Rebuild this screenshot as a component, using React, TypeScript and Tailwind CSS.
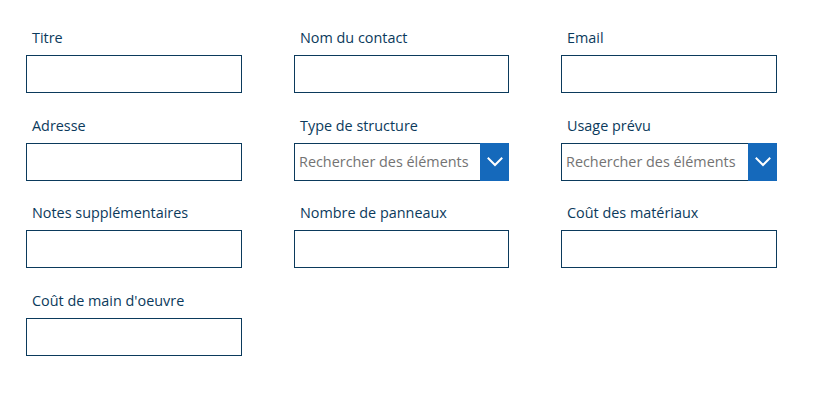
import React from 'react';

type Field = { label: string; kind?: 'text' | 'select' };

const fields: Field[] = [
  { label: 'Titre' },
  { label: 'Nom du contact' },
  { label: 'Email' },
  { label: 'Adresse' },
  { label: 'Type de structure', kind: 'select' },
  { label: 'Usage prévu', kind: 'select' },
  { label: 'Notes supplémentaires' },
  { label: 'Nombre de panneaux' },
  { label: 'Coût des matériaux' },
  { label: "Coût de main d'oeuvre" },
];

const ChevronDown = () => (
  <svg width="18" height="18" viewBox="0 0 18 18" fill="none">
    <path d="M2.5 5.5 9 12l6.5-6.5" stroke="white" strokeWidth="2" strokeLinecap="square" />
  </svg>
);

const FormField: React.FC<{ field: Field }> = ({ field }) => (
  <div className="flex flex-col">
    <label className="px-[6px] text-[14.4px] leading-[20px] text-[#0b3a5c] mb-[7px]">{field.label}</label>
    {field.kind === 'select' ? (
      <div className="flex h-[38px] border border-[#0b3a5c] bg-white">
        <input
          className="flex-1 min-w-0 px-[4px] text-[14.4px] text-[#333] placeholder:text-[#737373] outline-none"
          placeholder="Rechercher des éléments"
        />
        <div className="w-[29px] -my-px -mr-px bg-[#1569bb] flex items-center justify-center">
          <ChevronDown />
        </div>
      </div>
    ) : (
      <input className="h-[38px] border border-[#0b3a5c] bg-white px-2 text-[14.4px] outline-none" />
    )}
  </div>
);

export default function App() {
  return (
    <div className="w-[831px] h-[412px] bg-white pl-[26px] pt-[28px]" style={{ fontFamily: '"Open Sans", "Noto Sans", sans-serif' }}>
      <div className="grid grid-cols-[216px_215px_216px] gap-x-[52px] gap-y-[22.7px]">
        {fields.map((f) => (
          <FormField key={f.label} field={f} />
        ))}
      </div>
    </div>
  );
}
